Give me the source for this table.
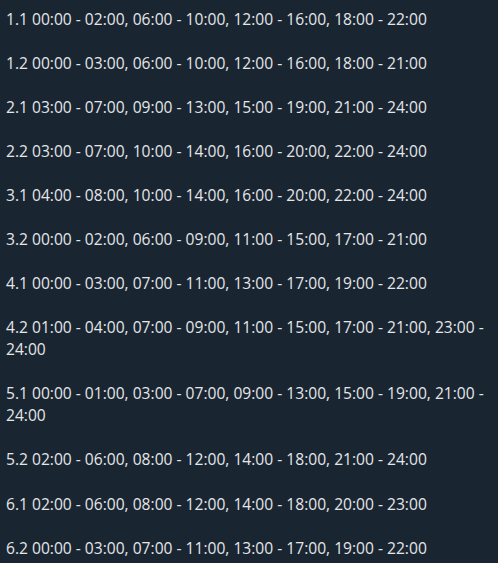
import React from 'react';

const schedule = [
  '1.1 00:00 - 02:00, 06:00 - 10:00, 12:00 - 16:00, 18:00 - 22:00',
  '1.2 00:00 - 03:00, 06:00 - 10:00, 12:00 - 16:00, 18:00 - 21:00',
  '2.1 03:00 - 07:00, 09:00 - 13:00, 15:00 - 19:00, 21:00 - 24:00',
  '2.2 03:00 - 07:00, 10:00 - 14:00, 16:00 - 20:00, 22:00 - 24:00',
  '3.1 04:00 - 08:00, 10:00 - 14:00, 16:00 - 20:00, 22:00 - 24:00',
  '3.2 00:00 - 02:00, 06:00 - 09:00, 11:00 - 15:00, 17:00 - 21:00',
  '4.1 00:00 - 03:00, 07:00 - 11:00, 13:00 - 17:00, 19:00 - 22:00',
  '4.2 01:00 - 04:00, 07:00 - 09:00, 11:00 - 15:00, 17:00 - 21:00, 23:00 - 24:00',
  '5.1 00:00 - 01:00, 03:00 - 07:00, 09:00 - 13:00, 15:00 - 19:00, 21:00 - 24:00',
  '5.2 02:00 - 06:00, 08:00 - 12:00, 14:00 - 18:00, 21:00 - 24:00',
  '6.1 02:00 - 06:00, 08:00 - 12:00, 14:00 - 18:00, 20:00 - 23:00',
  '6.2 00:00 - 03:00, 07:00 - 11:00, 13:00 - 17:00, 19:00 - 22:00',
];

const App = () => {
  return (
    <div className="min-h-screen bg-[#1a2532] px-[6px] pt-[7.5px] text-[#e4e6e8] font-['Open_Sans',sans-serif] text-[15.6px] leading-[22.05px]">
      {schedule.map((line) => (
        <p key={line} className="mb-[22.05px]">{line}</p>
      ))}
    </div>
  );
};

export default App;
